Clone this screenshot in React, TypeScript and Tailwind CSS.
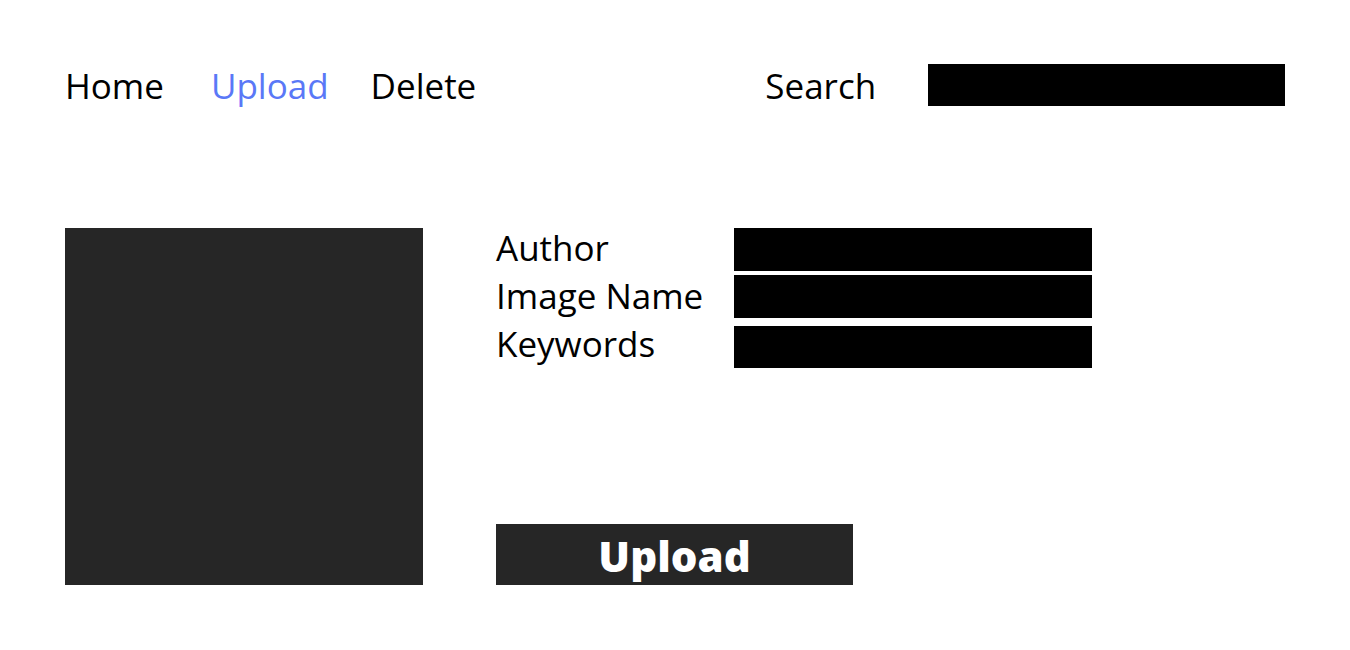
export default function App() {
  const font = { fontFamily: '"Open Sans", "Noto Sans", sans-serif' };
  return (
    <div className="w-[1350px] h-[650px] bg-white text-black overflow-hidden" style={font}>
      <div className="flex items-center pt-[64px] h-[106px] pl-[65px]">
        <span className="text-[35px] leading-[42px] pt-[2px]">Home</span>
        <span className="text-[35px] leading-[42px] pt-[2px] ml-[47px] text-[#5a78f7]">Upload</span>
        <span className="text-[35px] leading-[42px] pt-[2px] ml-[42px]">Delete</span>
        <span className="text-[35px] leading-[42px] pt-[2px] ml-[289px]">Search</span>
        <div className="ml-[52px] w-[357px] h-[42px] bg-black" />
      </div>
      <div className="flex pl-[65px] pt-[122px]">
        <div className="w-[358px] h-[357px] bg-[#262626]" />
        <div className="ml-[73px] flex flex-col h-[357px]">
          <div className="flex">
            <div className="w-[238px] flex flex-col mt-[-4px]">
              <span className="text-[35px] leading-[48px] h-[48px]">Author</span>
              <span className="text-[35px] leading-[48px] h-[48px]">Image Name</span>
              <span className="text-[35px] leading-[48px] h-[48px]">Keywords</span>
            </div>
            <div className="flex flex-col">
              <div className="w-[358px] h-[43px] bg-black" />
              <div className="w-[358px] h-[43px] bg-black mt-[4px]" />
              <div className="w-[358px] h-[42px] bg-black mt-[8px]" />
            </div>
          </div>
          <div className="mt-auto w-[357px] h-[61px] bg-[#262626] flex items-center justify-center">
            <span className="text-white font-extrabold text-[42px] leading-none pt-[2px]">Upload</span>
          </div>
        </div>
      </div>
    </div>
  );
}
